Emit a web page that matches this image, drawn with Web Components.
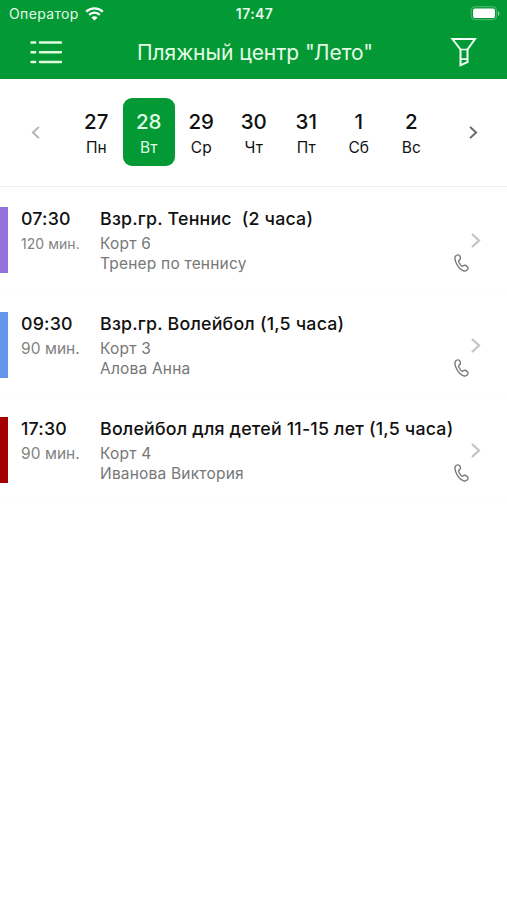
<!DOCTYPE html>
<html lang="ru">
<head>
<meta charset="utf-8">
<title>Расписание</title>
<style>
	body {
		margin: 0;
		background: #fff;
		color: #111;
		font-family: Inter, "Liberation Sans", sans-serif;
	}
</style>
</head>
<body>
<schedule-app></schedule-app>

<script>
class StatusBar extends HTMLElement {
	constructor() {
		super();
		this.attachShadow({mode: 'open'}).innerHTML = `
			<style>
			:host {
				display: grid;
				grid-template-columns: 1fr auto 1fr;
				align-items: center;
				height: 27px;
				padding: 0 6px 0 9px;
				color: #e4f9e7;
			}
			.carrier {
				display: flex;
				align-items: center;
				gap: 6px;
				font-size: 14px;
				line-height: 27px;
				letter-spacing: 0.35px;
			}
			.time {
				padding-right: 1px;
				font-size: 14px;
				font-weight: 600;
				line-height: 27px;
				letter-spacing: 0.4px;
			}
			.battery {justify-self: end;}
			svg {display: block;}
			</style>
			<div class="carrier">
				<span><slot name="carrier"></slot></span>
				<svg width="19" height="14" viewBox="0 0 19 14" fill="none" stroke="#fff" stroke-width="2.3">
					<path d="M1.2 4.700C5.8.2 13.2.2 17.8 4.700"/>
					<path d="M4.2 7.900C7.1 4.900 11.9 4.900 14.8 7.900"/>
					<path d="M9.5 13.4 6.4 10.4C8.1 8.9 10.9 8.9 12.600 10.4Z" fill="#fff" stroke="none"/>
				</svg>
			</div>
			<span class="time"><slot name="time"></slot></span>
			<svg class="battery" width="31" height="15" viewBox="0 0 31 15">
				<rect x="1.200" y=".7" width="25.5" height="13" rx="4" fill="none" stroke="#55b873"/>
				<rect x="3" y="2.500" width="22" height="9.500" rx="2" fill="#fff"/>
				<path d="M28 5.2c1.8.5 1.8 4.100 0 4.600z" fill="#8bd09e"/>
			</svg>
		`;
	}
}
customElements.define('status-bar', StatusBar);

class NavBar extends HTMLElement {
	constructor() {
		super();
		this.attachShadow({mode: 'open'}).innerHTML = `
			<style>
			:host {
				display: grid;
				grid-template-columns: 32px 1fr 32px;
				align-items: center;
				height: 52px;
				padding: 0 27px 0 30px;
				color: #e4fbe5;
			}
			.title {
				text-align: center;
				font-size: 21px;
				line-height: 52px;
				letter-spacing: -0.04px;
				white-space: nowrap;
			}
			svg {display: block; margin-bottom: 3px;}
			.filter {justify-self: end;}
			</style>
			<svg width="32" height="24" viewBox="0 0 32 24" fill="none" stroke="#e0fae2" stroke-width="2.500" stroke-linecap="round">
				<path d="M1.500 2.500h3.600M10 2.500h21M1.500 12.200h3.600M10 12.200h21M1.500 21.900h3.600M10 21.900h21"/>
			</svg>
			<div class="title"><slot></slot></div>
			<svg class="filter" width="32" height="30" viewBox="0 0 32 30" fill="none" stroke="#f2fff3" stroke-width="2">
				<path d="M4.500 2h22.500L19.500 12.500V25.200L12.500 28.200V12.500Z"/>
				<path d="M12.500 12.500H19.500M12.500 22.200H19.500" stroke-width="1.700"/>
			</svg>
		`;
	}
}
customElements.define('nav-bar', NavBar);

class ChevronIcon extends HTMLElement {
	constructor() {
		super();
		this.attachShadow({mode: 'open'}).innerHTML = `
			<style>
			:host {display: block; width: 10px; height: 15px;}
			:host([left]) {transform: scaleX(-1);}
			svg {display: block; width: 100%; height: 100%;}
			</style>
			<svg viewBox="0 0 10 15" fill="none" stroke="currentColor" stroke-width="2.300">
				<path d="M1 1 8 7.500 1 14"/>
			</svg>
		`;
	}
}
customElements.define('chevron-icon', ChevronIcon);

class WeekDay extends HTMLElement {
	constructor() {
		super();
		this.attachShadow({mode: 'open'}).innerHTML = `
			<style>
			:host {
				display: block;
				box-sizing: border-box;
				height: 68px;
				padding-top: 11px;
				border-radius: 9px;
				text-align: center;
				color: #111;
			}
			:host([selected]) {
				background: #039a35;
				color: #dffbe3;
			}
			.date {
				font-size: 20.5px;
				font-weight: 500;
				line-height: 26px;
			}
			.name {
				font-size: 15.5px;
				line-height: 25px;
			}
			</style>
			<div class="date"><slot></slot></div>
			<div class="name"></div>
		`;
	}

	connectedCallback() {
		this.shadowRoot.querySelector('.name').textContent = this.getAttribute('name');
	}
}
customElements.define('week-day', WeekDay);

class WeekStrip extends HTMLElement {
	constructor() {
		super();
		this.attachShadow({mode: 'open'}).innerHTML = `
			<style>
			:host {
				display: grid;
				grid-template-columns: 70px 367.5px 1fr;
				align-items: center;
				box-sizing: border-box;
				height: 108px;
				padding-top: 19px;
				padding-bottom: 20px;
				border-bottom: 1px solid #f0f0f0;
			}
			.days {
				display: grid;
				grid-template-columns: repeat(7, 1fr);
			}
			chevron-icon {width: 9px; height: 13px; margin-top: 1px;}
			.prev {margin-left: 31px; color: #b4b4b4;}
			.next {margin-left: 31px; color: #666;}
			</style>
			<chevron-icon class="prev" left></chevron-icon>
			<div class="days"><slot></slot></div>
			<chevron-icon class="next"></chevron-icon>
		`;
	}
}
customElements.define('week-strip', WeekStrip);

const eventTemplate = document.createElement('template');
eventTemplate.innerHTML = `
	<style>
	:host {
		display: grid;
		grid-template-columns: 8px 79px 1fr 54px;
		box-sizing: border-box;
		height: 105px;
		padding-top: 20px;
		border-bottom: 1px solid #fcfcfc;
		white-space: nowrap;
	}
	.bar {height: 66px; background: var(--event-color, #999);}
	.when {padding-left: 13px;}
	.what {padding-left: 13px; min-width: 0;}
	.time, .title {
		height: 25px;
		font-size: 17.8px;
		font-weight: 500;
		line-height: 23px;
		letter-spacing: 0.2px;
	}
	.title {white-space: pre;}
	.duration {
		height: 24px;
		font-size: 15.5px;
		line-height: 24px;
		letter-spacing: 0.05px;
		color: #828282;
	}
	.duration.long {font-size: 14px;}
	.line {
		height: 20px;
		font-size: 15.5px;
		line-height: 24px;
		letter-spacing: 0.2px;
		color: #777;
	}
	.actions {
		display: flex;
		flex-direction: column;
		padding-top: 26px;
		gap: 6px;
	}
	chevron-icon {margin-left: 18px; color: #c4c4c4;}
	.phone {display: block; margin-left: 1px;}
	</style>
	<div class="bar"></div>
	<div class="when">
		<div class="time"></div>
		<div class="duration"></div>
	</div>
	<div class="what">
		<div class="title"><slot></slot></div>
		<div class="line place"></div>
		<div class="line coach"></div>
	</div>
	<div class="actions">
		<chevron-icon></chevron-icon>
		<svg class="phone" width="15" height="18" viewBox="0 0 15 18" fill="none" stroke="#777" stroke-width="1.400" stroke-linejoin="round">
			<path d="M1.300 2.500C2.700.5 5.200.3 6 2.300C6.700 4 6.700 5.200 5.200 6.100C4.300 6.700 4.600 7.700 5.300 9C6.200 10.700 7.200 12 8.200 12.200C9.300 12.400 9.500 10.900 11 11.300C12.500 11.700 14.300 13.300 14 14.500C13.500 16.200 11.600 17.400 9.700 16.800C6.800 15.900 4.400 13.400 2.800 10.300C1.500 7.800.3 4.500 1.300 2.500Z"/>
		</svg>
	</div>
`;

class ScheduleEvent extends HTMLElement {
	constructor() {
		super();
		this.attachShadow({mode: 'open'});
		this.shadowRoot.appendChild(eventTemplate.content.cloneNode(true));
	}

	connectedCallback() {
		for (const name of ['time', 'duration', 'place', 'coach']) {
			this.shadowRoot.querySelector('.' + name).textContent = this.getAttribute(name);
		}
		// three-digit durations shrink to stay inside the time column
		if (parseInt(this.getAttribute('duration')) > 99) {
			this.shadowRoot.querySelector('.duration').classList.add('long');
		}
		this.style.setProperty('--event-color', this.getAttribute('color'));
	}
}
customElements.define('schedule-event', ScheduleEvent);

class ScheduleApp extends HTMLElement {
	constructor() {
		super();
		this.attachShadow({mode: 'open'}).innerHTML = `
			<style>
			:host {display: block; min-height: 900px;}
			header {height: 79px; background: #039a35;}
			</style>
			<header>
				<status-bar>
					<span slot="carrier">Оператор</span>
					<span slot="time">17:47</span>
				</status-bar>
				<nav-bar>Пляжный центр "Лето"</nav-bar>
			</header>
			<week-strip>
				<week-day name="Пн">27</week-day>
				<week-day name="Вт" selected>28</week-day>
				<week-day name="Ср">29</week-day>
				<week-day name="Чт">30</week-day>
				<week-day name="Пт">31</week-day>
				<week-day name="Сб">1</week-day>
				<week-day name="Вс">2</week-day>
			</week-strip>
			<main>
				<schedule-event time="07:30" duration="120 мин." place="Корт 6" coach="Тренер по теннису" color="#9370db">Взр.гр. Теннис  (2 часа)</schedule-event>
				<schedule-event time="09:30" duration="90 мин." place="Корт 3" coach="Алова Анна" color="#6495ed">Взр.гр. Волейбол (1,5 часа)</schedule-event>
				<schedule-event time="17:30" duration="90 мин." place="Корт 4" coach="Иванова Виктория" color="#a50000">Волейбол для детей 11-15 лет (1,5 часа)</schedule-event>
			</main>
		`;
	}
}
customElements.define('schedule-app', ScheduleApp);
</script>
</body>
</html>
